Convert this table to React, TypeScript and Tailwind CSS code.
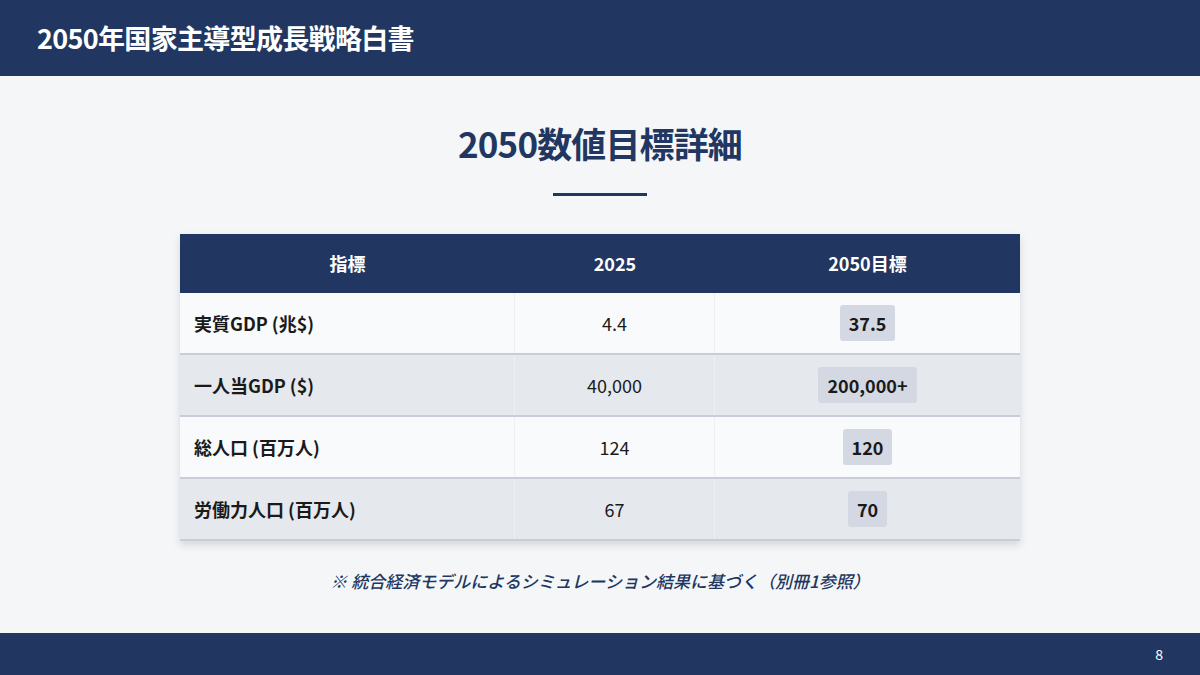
const rows = [
  { label: "実質GDP (兆$)", now: "4.4", goal: "37.5" },
  { label: "一人当GDP ($)", now: "40,000", goal: "200,000+" },
  { label: "総人口 (百万人)", now: "124", goal: "120" },
  { label: "労働力人口 (百万人)", now: "67", goal: "70" },
];

const font = { fontFamily: '"Noto Sans CJK JP", "Noto Sans", sans-serif' };

export default function App() {
  return (
    <div className="w-[1200px] h-[675px] flex flex-col bg-[#f5f6f8] text-[#1a1a1a] overflow-hidden" style={font}>
      <header className="h-[76px] bg-[#213761] flex items-center px-[37px] shrink-0">
        <h1 className="text-white text-[27px] font-bold tracking-tight">2050年国家主導型成長戦略白書</h1>
      </header>

      <main className="flex-1 min-h-0 flex flex-col items-center">
        <h2 className="mt-[41px] text-[35px] leading-[52px] font-bold text-[#213761] tracking-tight">2050数値目標詳細</h2>
        <div className="mt-[24px] w-[94px] h-[3px] bg-[#213761]" />

        <div className="mt-[38px] w-[840px] shadow-[0_4px_8px_rgba(30,40,70,0.15)]">
          <div className="grid grid-cols-[335px_200px_305px] h-[59px] bg-[#213761] text-white text-[18px] font-bold">
            <div className="flex items-center justify-center">指標</div>
            <div className="flex items-center justify-center">2025</div>
            <div className="flex items-center justify-center">2050目標</div>
          </div>
          {rows.map((r, i) => (
            <div
              key={i}
              className={`grid grid-cols-[335px_200px_305px] h-[62px] border-b-2 border-[#c9cdd8] text-[18px] ${
                i % 2 === 0 ? "bg-[#f9fafb]" : "bg-[#e5e8ed]"
              }`}
            >
              <div className="flex items-center px-[14px] font-bold border-r border-[#eef0f3]">{r.label}</div>
              <div className="flex items-center justify-center border-r border-[#eef0f3]">{r.now}</div>
              <div className="flex items-center justify-center">
                <span className="px-[9px] h-[36px] flex items-center rounded-[3px] bg-[#d4d8e2] font-bold">{r.goal}</span>
              </div>
            </div>
          ))}
        </div>

        <p className="mt-[27px] text-[17px] leading-[25px] italic font-medium text-[#213761]">※ 統合経済モデルによるシミュレーション結果に基づく（別冊1参照）</p>
      </main>

      <footer className="h-[42px] bg-[#213761] flex items-center justify-end px-[37px] shrink-0">
        <span className="text-white text-[14px]">8</span>
      </footer>
    </div>
  );
}
